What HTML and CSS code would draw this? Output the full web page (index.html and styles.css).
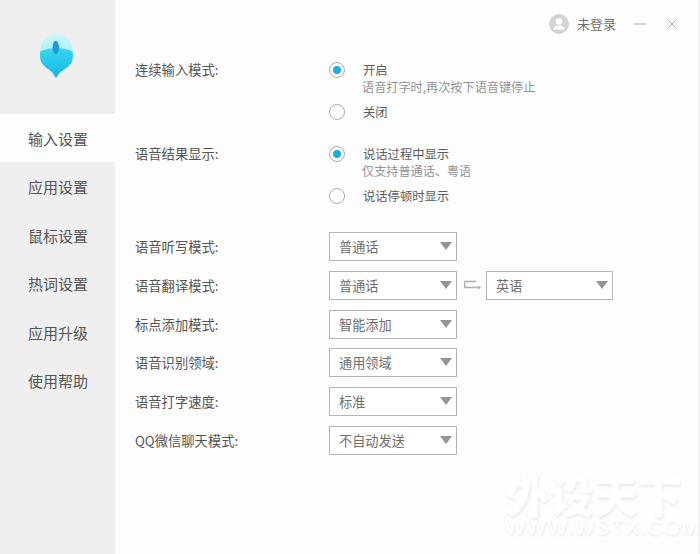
FILE: index.html
```html
<!DOCTYPE html>
<html lang="zh-CN">
<head>
<meta charset="utf-8">
<title>输入设置</title>
<link rel="stylesheet" href="styles.css">
</head>
<body>
<div class="app">
  <aside class="sidebar">
    <div class="logo">
      <svg width="33" height="44" viewBox="0 0 33 44">
        <defs>
          <linearGradient id="lower" x1="0" y1="0" x2="0" y2="1">
            <stop offset="0" stop-color="#38d6ee"/>
            <stop offset="1" stop-color="#16b6e8"/>
          </linearGradient>
          <linearGradient id="upper" x1="0" y1="0" x2="0" y2="1">
            <stop offset="0" stop-color="#cdf6f8"/>
            <stop offset="1" stop-color="#7fe6f0"/>
          </linearGradient>
        </defs>
        <path d="M16.500 0C8 0 1.500 6 .5 15C-.2 21 0 26 2 29.500C5 33.500 9 35 12 38C14 40 15 43 16 44C17 43 18 40 20.500 38C24 35 28 33.500 31 29.500C33 26 33.200 21 32.500 15C31.500 6 25 0 16.500 0Z" fill="url(#upper)"/>
        <path d="M.3 17.500C5 15.500 11 14 16.500 14C22 14 28 15.500 32.700 17.500C33.200 22 33 26 31 29.500C28 33.500 24 35 20.500 38C18 40 17 43 16 44C15 43 14 40 12 38C9 35 5 33.500 2 29.500C0 26-.2 22 .3 17.500Z" fill="url(#lower)"/>
        <ellipse cx="15.800" cy="13.500" rx="3.200" ry="6.800" fill="#1c98dc"/>
      </svg>
    </div>
    <nav class="nav">
      <div class="nav-item active">输入设置</div>
      <div class="nav-item">应用设置</div>
      <div class="nav-item">鼠标设置</div>
      <div class="nav-item">热词设置</div>
      <div class="nav-item">应用升级</div>
      <div class="nav-item">使用帮助</div>
    </nav>
  </aside>
  <main class="main">
    <header class="topbar">
      <svg class="avatar" width="20" height="20" viewBox="0 0 20 20">
        <circle cx="10" cy="10" r="10" fill="#d4d4d4"/>
        <circle cx="10" cy="7.500" r="3.300" fill="#fdfdfd"/>
        <path d="M4.500 15.500C4.500 12.500 7 11.500 10 11.500S15.500 12.500 15.500 15.500Z" fill="#fdfdfd"/>
      </svg>
      <span class="user">未登录</span>
      <svg class="win-min" width="12" height="12" viewBox="0 0 12 12"><path d="M0 6H12" stroke="#a8a8a8" stroke-width="1"/></svg>
      <svg class="win-close" width="10" height="10" viewBox="0 0 10 10"><path d="M.5.500L9.500 9.500M9.500.500L.5 9.500" stroke="#a8a8a8" stroke-width="1"/></svg>
    </header>

    <section class="radio-row first">
      <div class="label">连续输入模式:</div>
      <div class="options">
        <div class="option">
          <span class="radio on"></span>
          <div class="option-text"><div class="option-title">开启</div><div class="hint">语音打字时,再次按下语音键停止</div></div>
        </div>
        <div class="option">
          <span class="radio"></span>
          <div class="option-text"><div class="option-title">关闭</div></div>
        </div>
      </div>
    </section>

    <section class="radio-row second">
      <div class="label">语音结果显示:</div>
      <div class="options">
        <div class="option">
          <span class="radio on"></span>
          <div class="option-text"><div class="option-title">说话过程中显示</div><div class="hint">仅支持普通话、粤语</div></div>
        </div>
        <div class="option">
          <span class="radio"></span>
          <div class="option-text"><div class="option-title">说话停顿时显示</div></div>
        </div>
      </div>
    </section>

    <section class="selects">
      <div class="select-row"><div class="label">语音听写模式:</div><div class="select"><span>普通话</span><i class="caret"></i></div></div>
      <div class="select-row"><div class="label">语音翻译模式:</div><div class="select"><span>普通话</span><i class="caret"></i></div>
        <svg class="swap" width="17" height="10" viewBox="0 0 17 10"><path d="M15 7.500H.7V1.500H12" fill="none" stroke="#b0b0b0" stroke-width="1.300"/><path d="M14 5.500L17 7.500L14 9.500Z" fill="#b0b0b0"/></svg>
        <div class="select narrow"><span>英语</span><i class="caret"></i></div></div>
      <div class="select-row"><div class="label">标点添加模式:</div><div class="select"><span>智能添加</span><i class="caret"></i></div></div>
      <div class="select-row"><div class="label">语音识别领域:</div><div class="select"><span>通用领域</span><i class="caret"></i></div></div>
      <div class="select-row"><div class="label">语音打字速度:</div><div class="select"><span>标准</span><i class="caret"></i></div></div>
      <div class="select-row"><div class="label">QQ微信聊天模式:</div><div class="select"><span>不自动发送</span><i class="caret"></i></div></div>
    </section>
  </main>
  <div class="watermark">
    <div class="wm-cn">外设天下</div>
    <div class="wm-en">WWW.WSTX.COM</div>
  </div>
</div>
</body>
</html>
```
FILE: styles.css
```css
* { box-sizing: border-box; }
html, body { margin: 0; padding: 0; }
body {
  width: 700px;
  height: 554px;
  overflow: hidden;
  font-family: "Noto Sans CJK SC", "Noto Sans", sans-serif;
  color: #555;
}
.app {
  position: relative;
  display: flex;
  width: 700px;
  height: 554px;
  background: #fdfdfd;
  border-right: 1px solid #ececec;
}
.sidebar {
  width: 115px;
  flex: none;
  background: #efefef;
}
.logo {
  height: 114px;
  display: flex;
  justify-content: center;
  padding-top: 34px;
  padding-right: 3px;
}
.nav-item {
  height: 48.400px;
  line-height: 49.400px;
  padding-left: 28px;
  font-size: 15px;
  color: #555;
}
.nav-item.active { background: #fdfdfd; }
.main {
  flex: 1;
  padding-left: 20px;
}
.topbar {
  height: 48px;
  display: flex;
  align-items: center;
  padding-left: 414px;
}
.avatar { flex: none; }
.user {
  margin-left: 8px;
  font-size: 13px;
  color: #6e6e6e;
  line-height: 20px;
}
.win-min { margin-left: 18px; flex: none; }
.win-close { margin-left: 21px; flex: none; }
.label {
  width: 194px;
  flex: none;
  font-size: 13.300px;
  color: #555;
  line-height: 18px;
}
.radio-row {
  display: flex;
  align-items: flex-start;
}
.radio-row.first { margin-top: 13px; }
.radio-row.second { margin-top: 24px; }
.option {
  display: flex;
  align-items: flex-start;
  gap: 18px;
  font-size: 12.300px;
  margin-bottom: 8px;
}
.option:last-child { margin-bottom: 0; }
.radio {
  flex: none;
  width: 16px;
  height: 16px;
  margin-top: 1px;
  border: 1px solid #a9a9a9;
  border-radius: 50%;
  background: #fff;
  position: relative;
}
.radio.on::after {
  content: "";
  position: absolute;
  left: 3px;
  top: 3px;
  width: 8px;
  height: 8px;
  border-radius: 50%;
  background: #1badde;
}
.option-title {
  line-height: 18px;
  color: #5c5c5c;
}
.hint {
  font-size: 12.150px;
  line-height: 16px;
  color: #939393;
  margin-left: -1px;
}
.selects { margin-top: 27px; }
.select-row {
  display: flex;
  align-items: center;
  height: 29px;
  margin-bottom: 9.800px;
}
.select-row .label { padding-top: 1px; }
.select {
  position: relative;
  display: flex;
  align-items: center;
  width: 128px;
  height: 29px;
  flex: none;
  padding-left: 9px;
  border: 1px solid #b5b5b5;
  background: #fff;
  font-size: 13.200px;
  color: #6e6e6e;
}
.select.narrow { width: 127px; }
.caret {
  position: absolute;
  right: 4px;
  top: 9px;
  width: 0;
  height: 0;
  border-left: 6px solid transparent;
  border-right: 6px solid transparent;
  border-top: 8px solid #949494;
}
.swap {
  flex: none;
  margin-left: 7px;
  margin-right: 5px;
}
.watermark {
  position: absolute;
  left: 505px;
  top: 472px;
  width: 177px;
  text-align: center;
  color: #fff;
  text-shadow: 1px 2px 3px rgba(0, 0, 0, .08);
  pointer-events: none;
}
.wm-cn {
  font-size: 44px;
  line-height: 44px;
  font-weight: 900;
  white-space: nowrap;
}
.wm-en {
  font-family: "Liberation Sans", sans-serif;
  font-size: 21px;
  letter-spacing: 1.300px;
  line-height: 18px;
  margin-top: 2px;
  white-space: nowrap;
}
```
